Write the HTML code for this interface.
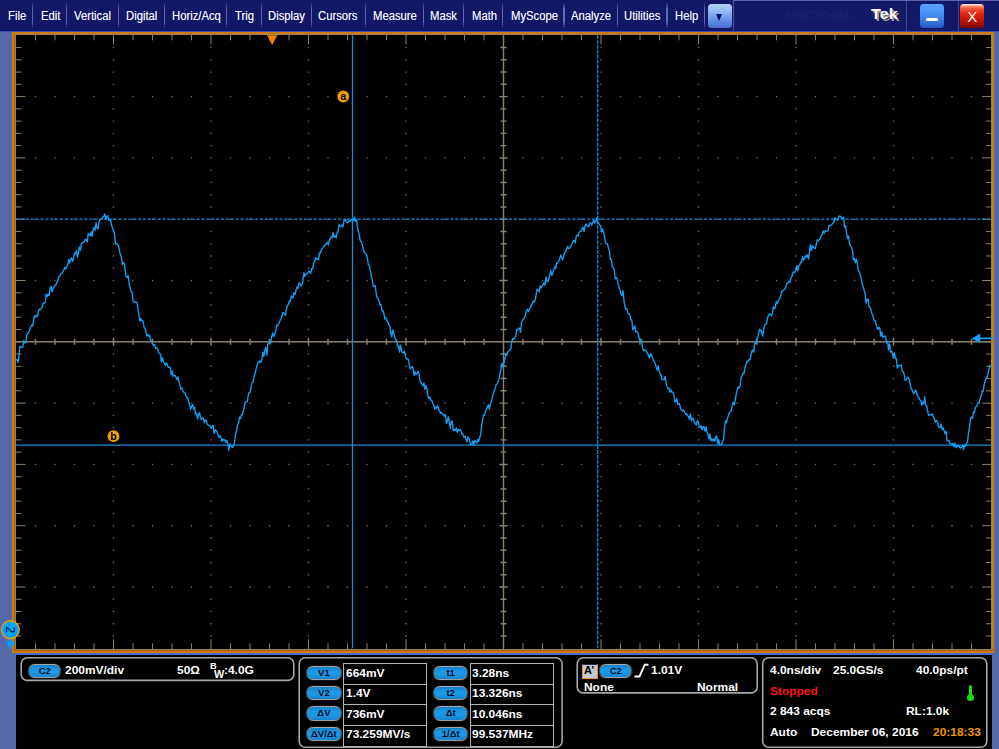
<!DOCTYPE html>
<html lang="en">
<head>
<meta charset="utf-8">
<title>Tek MSO70404C</title>
<style>
html,body{margin:0;padding:0;}
body{width:999px;height:749px;overflow:hidden;background:#5568aa;position:relative;
  font-family:"Liberation Sans",sans-serif;font-size:12px;color:#fff;}
.abs{position:absolute;}
/* ---------- menu bar ---------- */
#menubar{left:0;top:0;width:999px;height:31px;background:#131768;}
#menuline{left:0;top:31px;width:999px;height:1px;background:#3a4cb4;}
.mi{position:absolute;top:8px;height:16px;line-height:16px;font-size:12px;color:#f4f4ff;white-space:nowrap;transform:scaleX(0.94);transform-origin:0 50%;text-shadow:0 0 0.6px rgba(255,255,255,0.6);}
.sep{position:absolute;top:3px;width:1.2px;height:25px;
  background:linear-gradient(to bottom,rgba(110,120,190,0.1),rgba(110,120,190,0.85) 25%,rgba(110,120,190,0.85) 75%,rgba(110,120,190,0.1));}
#dd{left:707.5px;top:4px;width:24px;height:24px;border-radius:3.5px;
  background:linear-gradient(to bottom,#b6d2fc 0%,#8db4f4 35%,#5884dc 78%,#4870cc 100%);box-shadow:0 0 1px #0a0f50;}
#dd:after{content:"";position:absolute;left:8.5px;top:9.5px;border-left:3.6px solid transparent;border-right:3.6px solid transparent;border-top:7px solid #0a0a78;}
#titlebox{left:733px;top:0;width:266px;height:31px;box-sizing:border-box;border-top:1px solid #5a62ac;border-left:1px solid #4a52a0;background:#141967;}
#model{left:786px;top:8px;font-size:13px;line-height:16px;color:#1b2172;transform:scaleX(0.97);transform-origin:0 50%;}
#tek{left:871px;top:4px;font-size:15px;line-height:20px;font-weight:bold;color:#fff;text-shadow:1.6px 1.6px 0.4px #a09888;transform:scaleX(1.08);transform-origin:0 50%;}
.tsep{position:absolute;top:1px;width:1px;height:30px;background:#3e4696;}
#minb{left:920.3px;top:4px;width:24px;height:24px;border-radius:3.5px;
  background:linear-gradient(to bottom,#5aa2ff 0%,#4a92f6 40%,#3270d8 78%,#2458b8 100%);}
#minb:after{content:"";position:absolute;left:6px;top:14.4px;width:11.6px;height:2.2px;background:#fff;border-radius:1px;}
#closeb{left:960.2px;top:4px;width:24px;height:24px;border-radius:3.5px;text-align:center;
  background:linear-gradient(to bottom,#fff0e8 0%,#f46a48 14%,#e42408 40%,#c81400 66%,#7a0800 100%);
  color:#fff;font-size:15px;line-height:25px;font-weight:normal;}
/* ---------- scope frame ---------- */
#frame{left:12px;top:32px;width:982px;height:620.6px;background:#d07a00;}
#frameshade{left:14.2px;top:34px;width:1.8px;height:616px;background:rgba(90,50,10,0.35);}
#inner{left:16.2px;top:35px;width:975px;height:614.3px;background:#000;box-shadow:0 0 0 0.9px #9c8860;}
#strip{left:12px;top:652.6px;width:982px;height:2.4px;background:#4c6ac4;}
#bottom{left:16px;top:655px;width:976px;height:94px;background:#000;}
svg.scope{position:absolute;left:0;top:0;}
/* ---------- readout panels ---------- */
.panel{position:absolute;box-sizing:border-box;border:2px solid #8e8e8e;border-radius:6.5px;background:#000;}
.b{opacity:0.999;font-weight:bold;font-size:11.6px;line-height:14px;white-space:nowrap;position:absolute;color:#fff;transform:scaleX(1.03);transform-origin:0 50%;}
.pill{position:absolute;box-sizing:border-box;height:14.4px;border-radius:7.5px;border:1.7px solid transparent;margin:-0.8px 0 0 -0.5px;padding-right:0;
  background:linear-gradient(to bottom,#127cc4 0%,#1a96e4 30%,#1c9ae8 60%,#1482cc 100%) padding-box,
             linear-gradient(to bottom,#b0b0b0 0%,#686868 28%,#3c3c3c 60%,#a8a8a8 100%) border-box;
  color:#00081c;font-weight:bold;font-size:9.5px;line-height:11.8px;text-align:center;white-space:nowrap;box-shadow:0 0 1.2px #707070;}
.vbox{position:absolute;box-sizing:border-box;border:1px solid #b4b4b4;background:#000;}
</style>
</head>
<body>
<!-- menu bar -->
<div id="menubar" class="abs"></div>
<div id="menuline" class="abs"></div>
<div class="mi" style="left:7.5px">File</div>
<div class="mi" style="left:40.5px">Edit</div>
<div class="mi" style="left:74.2px">Vertical</div>
<div class="mi" style="left:125.5px">Digital</div>
<div class="mi" style="left:172.2px">Horiz/Acq</div>
<div class="mi" style="left:234.7px">Trig</div>
<div class="mi" style="left:267.9px">Display</div>
<div class="mi" style="left:318.4px">Cursors</div>
<div class="mi" style="left:372.9px">Measure</div>
<div class="mi" style="left:430.4px">Mask</div>
<div class="mi" style="left:471.6px">Math</div>
<div class="mi" style="left:510.8px">MyScope</div>
<div class="mi" style="left:571.2px">Analyze</div>
<div class="mi" style="left:624.0px">Utilities</div>
<div class="mi" style="left:674.8px">Help</div>
<div class="sep" style="left:32px"></div>
<div class="sep" style="left:66.2px"></div>
<div class="sep" style="left:117.6px"></div>
<div class="sep" style="left:163.6px"></div>
<div class="sep" style="left:226.3px"></div>
<div class="sep" style="left:260.6px"></div>
<div class="sep" style="left:311.2px"></div>
<div class="sep" style="left:364.9px"></div>
<div class="sep" style="left:422.5px"></div>
<div class="sep" style="left:463.2px"></div>
<div class="sep" style="left:502.3px"></div>
<div class="sep" style="left:563.4px"></div>
<div class="sep" style="left:616.5px"></div>
<div class="sep" style="left:666.4px"></div>
<div class="sep" style="left:703.6px"></div>
<div id="titlebox" class="abs"></div>
<div id="dd" class="abs"></div>
<div id="model" class="abs">MSO70404C</div>
<div id="tek" class="abs">Tek</div>
<div class="tsep" style="left:906.4px"></div>
<div class="tsep" style="left:958.2px"></div>
<div id="minb" class="abs"></div>
<div id="closeb" class="abs">X</div>

<!-- scope display -->
<div id="frame" class="abs"></div>
<div id="frameshade" class="abs"></div>
<div class="abs" style="left:14.2px;top:649.3px;width:978.6px;height:1.3px;background:rgba(90,50,10,0.35)"></div>
<div class="abs" style="left:991.2px;top:34px;width:1px;height:616px;background:rgba(90,50,10,0.3)"></div>
<div id="inner" class="abs"></div>
<div id="strip" class="abs"></div>
<div id="bottom" class="abs"></div>

<!-- panel 1 : channel -->
<div class="pill" style="left:28.7px;top:664.8px;width:33.2px">C2</div>
<div class="b" style="left:65.4px;top:663.0px">200mV/div</div>
<div class="b" style="left:177.4px;top:663.0px">50&#937;</div>
<div class="b" style="left:209.6px;top:658.6px;font-size:9px">B</div>
<div class="b" style="left:213.8px;top:667.2px;font-size:10.5px">W</div>
<div class="b" style="left:223.6px;top:663.0px">:4.0G</div>

<!-- panel 2 : cursor readouts -->
<div class="pill" style="left:306.6px;top:666.6px;width:35.6px">V1</div>
<div class="pill" style="left:306.6px;top:686.8px;width:35.6px">V2</div>
<div class="pill" style="left:306.6px;top:707.2px;width:35.6px">&#916;V</div>
<div class="pill" style="left:306.6px;top:727.6px;width:35.6px">&#916;V/&#916;t</div>
<div class="vbox" style="left:343.2px;top:663.2px;width:84.2px;height:21.7px"></div>
<div class="vbox" style="left:343.2px;top:683.9px;width:84.2px;height:20.9px"></div>
<div class="vbox" style="left:343.2px;top:703.8px;width:84.2px;height:21.8px"></div>
<div class="vbox" style="left:343.2px;top:724.6px;width:84.2px;height:22.3px"></div>
<div class="b" style="left:345.5px;top:665.9px">664mV</div>
<div class="b" style="left:345.5px;top:686.3px">1.4V</div>
<div class="b" style="left:345.5px;top:706.6px">736mV</div>
<div class="b" style="left:345.5px;top:727.0px">73.259MV/s</div>
<div class="pill" style="left:433.4px;top:666.6px;width:35.6px">t1</div>
<div class="pill" style="left:433.4px;top:686.8px;width:35.6px">t2</div>
<div class="pill" style="left:433.4px;top:707.2px;width:35.6px">&#916;t</div>
<div class="pill" style="left:433.4px;top:727.6px;width:35.6px">1/&#916;t</div>
<div class="vbox" style="left:470.0px;top:663.2px;width:84.2px;height:21.7px"></div>
<div class="vbox" style="left:470.0px;top:683.9px;width:84.2px;height:20.9px"></div>
<div class="vbox" style="left:470.0px;top:703.8px;width:84.2px;height:21.8px"></div>
<div class="vbox" style="left:470.0px;top:724.6px;width:84.2px;height:22.3px"></div>
<div class="b" style="left:472.4px;top:665.9px">3.28ns</div>
<div class="b" style="left:472.4px;top:686.3px">13.326ns</div>
<div class="b" style="left:472.4px;top:706.6px">10.046ns</div>
<div class="b" style="left:472.4px;top:727.0px">99.537MHz</div>

<!-- panel 3 : trigger -->
<div class="abs" style="left:582.4px;top:663.6px;width:15.6px;height:15.2px;box-sizing:border-box;background:#c6c8d2;border:1.3px solid #f09020;border-top:1px solid #283058;color:#000;font-size:11px;line-height:11.4px;text-align:left;padding-left:0.6px;font-weight:bold;letter-spacing:-0.4px;">A'</div>
<div class="pill" style="left:599.8px;top:664.5px;width:33.0px">C2</div>
<svg class="abs" style="left:634px;top:663px" width="16" height="16" viewBox="0 0 16 16"><path d="M0.5 13.5h5l5.2-11.8h3.8" fill="none" stroke="#fff" stroke-width="1.9"/></svg>
<div class="b" style="left:651.2px;top:662.5px">1.01V</div>
<div class="b" style="left:584.2px;top:679.5px">None</div>
<div class="b" style="left:697.2px;top:679.5px">Normal</div>

<!-- panel 4 : horizontal / acquisition -->
<div class="b" style="left:769.8px;top:663.0px">4.0ns/div</div>
<div class="b" style="left:833.4px;top:663.0px">25.0GS/s</div>
<div class="b" style="left:916.4px;top:663.0px">40.0ps/pt</div>
<div class="b" style="left:769.8px;top:684.0px;color:#ff1010">Stopped</div>
<div class="abs" style="left:968.6px;top:685px;width:3px;height:13px;background:#10e010;border-radius:1.5px"></div>
<div class="abs" style="left:966.6px;top:693.6px;width:7px;height:7px;background:#10e010;border-radius:50%"></div>
<div class="b" style="left:769.8px;top:704.4px">2 843 acqs</div>
<div class="b" style="left:906.4px;top:704.4px">RL:1.0k</div>
<div class="b" style="left:769.8px;top:724.5px">Auto</div>
<div class="b" style="left:811.0px;top:724.5px">December 06, 2016</div>
<div class="b" style="left:933.0px;top:724.5px;color:#f09408">20:18:33</div>

<svg class="scope" width="999" height="749" viewBox="0 0 999 749"><path d="M112.8 47.56h1.4M112.8 59.82h1.4M112.8 72.08h1.4M112.8 84.34h1.4M112.8 96.6h1.4M112.8 108.86h1.4M112.8 121.12h1.4M112.8 133.38h1.4M112.8 145.64h1.4M112.8 157.9h1.4M112.8 170.16h1.4M112.8 182.42h1.4M112.8 194.68h1.4M112.8 206.94h1.4M112.8 219.2h1.4M112.8 231.46h1.4M112.8 243.72h1.4M112.8 255.98h1.4M112.8 268.24h1.4M112.8 280.5h1.4M112.8 292.76h1.4M112.8 305.02h1.4M112.8 317.28h1.4M112.8 329.54h1.4M112.8 341.8h1.4M112.8 354.06h1.4M112.8 366.32h1.4M112.8 378.58h1.4M112.8 390.84h1.4M112.8 403.1h1.4M112.8 415.36h1.4M112.8 427.62h1.4M112.8 439.88h1.4M112.8 452.14h1.4M112.8 464.4h1.4M112.8 476.66h1.4M112.8 488.92h1.4M112.8 501.18h1.4M112.8 513.44h1.4M112.8 525.7h1.4M112.8 537.96h1.4M112.8 550.22h1.4M112.8 562.48h1.4M112.8 574.74h1.4M112.8 587h1.4M112.8 599.26h1.4M112.8 611.52h1.4M112.8 623.78h1.4M112.8 636.04h1.4M210.3 47.56h1.4M210.3 59.82h1.4M210.3 72.08h1.4M210.3 84.34h1.4M210.3 96.6h1.4M210.3 108.86h1.4M210.3 121.12h1.4M210.3 133.38h1.4M210.3 145.64h1.4M210.3 157.9h1.4M210.3 170.16h1.4M210.3 182.42h1.4M210.3 194.68h1.4M210.3 206.94h1.4M210.3 219.2h1.4M210.3 231.46h1.4M210.3 243.72h1.4M210.3 255.98h1.4M210.3 268.24h1.4M210.3 280.5h1.4M210.3 292.76h1.4M210.3 305.02h1.4M210.3 317.28h1.4M210.3 329.54h1.4M210.3 341.8h1.4M210.3 354.06h1.4M210.3 366.32h1.4M210.3 378.58h1.4M210.3 390.84h1.4M210.3 403.1h1.4M210.3 415.36h1.4M210.3 427.62h1.4M210.3 439.88h1.4M210.3 452.14h1.4M210.3 464.4h1.4M210.3 476.66h1.4M210.3 488.92h1.4M210.3 501.18h1.4M210.3 513.44h1.4M210.3 525.7h1.4M210.3 537.96h1.4M210.3 550.22h1.4M210.3 562.48h1.4M210.3 574.74h1.4M210.3 587h1.4M210.3 599.26h1.4M210.3 611.52h1.4M210.3 623.78h1.4M210.3 636.04h1.4M307.8 47.56h1.4M307.8 59.82h1.4M307.8 72.08h1.4M307.8 84.34h1.4M307.8 96.6h1.4M307.8 108.86h1.4M307.8 121.12h1.4M307.8 133.38h1.4M307.8 145.64h1.4M307.8 157.9h1.4M307.8 170.16h1.4M307.8 182.42h1.4M307.8 194.68h1.4M307.8 206.94h1.4M307.8 219.2h1.4M307.8 231.46h1.4M307.8 243.72h1.4M307.8 255.98h1.4M307.8 268.24h1.4M307.8 280.5h1.4M307.8 292.76h1.4M307.8 305.02h1.4M307.8 317.28h1.4M307.8 329.54h1.4M307.8 341.8h1.4M307.8 354.06h1.4M307.8 366.32h1.4M307.8 378.58h1.4M307.8 390.84h1.4M307.8 403.1h1.4M307.8 415.36h1.4M307.8 427.62h1.4M307.8 439.88h1.4M307.8 452.14h1.4M307.8 464.4h1.4M307.8 476.66h1.4M307.8 488.92h1.4M307.8 501.18h1.4M307.8 513.44h1.4M307.8 525.7h1.4M307.8 537.96h1.4M307.8 550.22h1.4M307.8 562.48h1.4M307.8 574.74h1.4M307.8 587h1.4M307.8 599.26h1.4M307.8 611.52h1.4M307.8 623.78h1.4M307.8 636.04h1.4M405.3 47.56h1.4M405.3 59.82h1.4M405.3 72.08h1.4M405.3 84.34h1.4M405.3 96.6h1.4M405.3 108.86h1.4M405.3 121.12h1.4M405.3 133.38h1.4M405.3 145.64h1.4M405.3 157.9h1.4M405.3 170.16h1.4M405.3 182.42h1.4M405.3 194.68h1.4M405.3 206.94h1.4M405.3 219.2h1.4M405.3 231.46h1.4M405.3 243.72h1.4M405.3 255.98h1.4M405.3 268.24h1.4M405.3 280.5h1.4M405.3 292.76h1.4M405.3 305.02h1.4M405.3 317.28h1.4M405.3 329.54h1.4M405.3 341.8h1.4M405.3 354.06h1.4M405.3 366.32h1.4M405.3 378.58h1.4M405.3 390.84h1.4M405.3 403.1h1.4M405.3 415.36h1.4M405.3 427.62h1.4M405.3 439.88h1.4M405.3 452.14h1.4M405.3 464.4h1.4M405.3 476.66h1.4M405.3 488.92h1.4M405.3 501.18h1.4M405.3 513.44h1.4M405.3 525.7h1.4M405.3 537.96h1.4M405.3 550.22h1.4M405.3 562.48h1.4M405.3 574.74h1.4M405.3 587h1.4M405.3 599.26h1.4M405.3 611.52h1.4M405.3 623.78h1.4M405.3 636.04h1.4M600.3 47.56h1.4M600.3 59.82h1.4M600.3 72.08h1.4M600.3 84.34h1.4M600.3 96.6h1.4M600.3 108.86h1.4M600.3 121.12h1.4M600.3 133.38h1.4M600.3 145.64h1.4M600.3 157.9h1.4M600.3 170.16h1.4M600.3 182.42h1.4M600.3 194.68h1.4M600.3 206.94h1.4M600.3 219.2h1.4M600.3 231.46h1.4M600.3 243.72h1.4M600.3 255.98h1.4M600.3 268.24h1.4M600.3 280.5h1.4M600.3 292.76h1.4M600.3 305.02h1.4M600.3 317.28h1.4M600.3 329.54h1.4M600.3 341.8h1.4M600.3 354.06h1.4M600.3 366.32h1.4M600.3 378.58h1.4M600.3 390.84h1.4M600.3 403.1h1.4M600.3 415.36h1.4M600.3 427.62h1.4M600.3 439.88h1.4M600.3 452.14h1.4M600.3 464.4h1.4M600.3 476.66h1.4M600.3 488.92h1.4M600.3 501.18h1.4M600.3 513.44h1.4M600.3 525.7h1.4M600.3 537.96h1.4M600.3 550.22h1.4M600.3 562.48h1.4M600.3 574.74h1.4M600.3 587h1.4M600.3 599.26h1.4M600.3 611.52h1.4M600.3 623.78h1.4M600.3 636.04h1.4M697.8 47.56h1.4M697.8 59.82h1.4M697.8 72.08h1.4M697.8 84.34h1.4M697.8 96.6h1.4M697.8 108.86h1.4M697.8 121.12h1.4M697.8 133.38h1.4M697.8 145.64h1.4M697.8 157.9h1.4M697.8 170.16h1.4M697.8 182.42h1.4M697.8 194.68h1.4M697.8 206.94h1.4M697.8 219.2h1.4M697.8 231.46h1.4M697.8 243.72h1.4M697.8 255.98h1.4M697.8 268.24h1.4M697.8 280.5h1.4M697.8 292.76h1.4M697.8 305.02h1.4M697.8 317.28h1.4M697.8 329.54h1.4M697.8 341.8h1.4M697.8 354.06h1.4M697.8 366.32h1.4M697.8 378.58h1.4M697.8 390.84h1.4M697.8 403.1h1.4M697.8 415.36h1.4M697.8 427.62h1.4M697.8 439.88h1.4M697.8 452.14h1.4M697.8 464.4h1.4M697.8 476.66h1.4M697.8 488.92h1.4M697.8 501.18h1.4M697.8 513.44h1.4M697.8 525.7h1.4M697.8 537.96h1.4M697.8 550.22h1.4M697.8 562.48h1.4M697.8 574.74h1.4M697.8 587h1.4M697.8 599.26h1.4M697.8 611.52h1.4M697.8 623.78h1.4M697.8 636.04h1.4M795.3 47.56h1.4M795.3 59.82h1.4M795.3 72.08h1.4M795.3 84.34h1.4M795.3 96.6h1.4M795.3 108.86h1.4M795.3 121.12h1.4M795.3 133.38h1.4M795.3 145.64h1.4M795.3 157.9h1.4M795.3 170.16h1.4M795.3 182.42h1.4M795.3 194.68h1.4M795.3 206.94h1.4M795.3 219.2h1.4M795.3 231.46h1.4M795.3 243.72h1.4M795.3 255.98h1.4M795.3 268.24h1.4M795.3 280.5h1.4M795.3 292.76h1.4M795.3 305.02h1.4M795.3 317.28h1.4M795.3 329.54h1.4M795.3 341.8h1.4M795.3 354.06h1.4M795.3 366.32h1.4M795.3 378.58h1.4M795.3 390.84h1.4M795.3 403.1h1.4M795.3 415.36h1.4M795.3 427.62h1.4M795.3 439.88h1.4M795.3 452.14h1.4M795.3 464.4h1.4M795.3 476.66h1.4M795.3 488.92h1.4M795.3 501.18h1.4M795.3 513.44h1.4M795.3 525.7h1.4M795.3 537.96h1.4M795.3 550.22h1.4M795.3 562.48h1.4M795.3 574.74h1.4M795.3 587h1.4M795.3 599.26h1.4M795.3 611.52h1.4M795.3 623.78h1.4M795.3 636.04h1.4M892.8 47.56h1.4M892.8 59.82h1.4M892.8 72.08h1.4M892.8 84.34h1.4M892.8 96.6h1.4M892.8 108.86h1.4M892.8 121.12h1.4M892.8 133.38h1.4M892.8 145.64h1.4M892.8 157.9h1.4M892.8 170.16h1.4M892.8 182.42h1.4M892.8 194.68h1.4M892.8 206.94h1.4M892.8 219.2h1.4M892.8 231.46h1.4M892.8 243.72h1.4M892.8 255.98h1.4M892.8 268.24h1.4M892.8 280.5h1.4M892.8 292.76h1.4M892.8 305.02h1.4M892.8 317.28h1.4M892.8 329.54h1.4M892.8 341.8h1.4M892.8 354.06h1.4M892.8 366.32h1.4M892.8 378.58h1.4M892.8 390.84h1.4M892.8 403.1h1.4M892.8 415.36h1.4M892.8 427.62h1.4M892.8 439.88h1.4M892.8 452.14h1.4M892.8 464.4h1.4M892.8 476.66h1.4M892.8 488.92h1.4M892.8 501.18h1.4M892.8 513.44h1.4M892.8 525.7h1.4M892.8 537.96h1.4M892.8 550.22h1.4M892.8 562.48h1.4M892.8 574.74h1.4M892.8 587h1.4M892.8 599.26h1.4M892.8 611.52h1.4M892.8 623.78h1.4M892.8 636.04h1.4M34.8 96.6h1.4M54.3 96.6h1.4M73.8 96.6h1.4M93.3 96.6h1.4M132.3 96.6h1.4M151.8 96.6h1.4M171.3 96.6h1.4M190.8 96.6h1.4M229.8 96.6h1.4M249.3 96.6h1.4M268.8 96.6h1.4M288.3 96.6h1.4M327.3 96.6h1.4M346.8 96.6h1.4M366.3 96.6h1.4M385.8 96.6h1.4M424.8 96.6h1.4M444.3 96.6h1.4M463.8 96.6h1.4M483.3 96.6h1.4M522.3 96.6h1.4M541.8 96.6h1.4M561.3 96.6h1.4M580.8 96.6h1.4M619.8 96.6h1.4M639.3 96.6h1.4M658.8 96.6h1.4M678.3 96.6h1.4M717.3 96.6h1.4M736.8 96.6h1.4M756.3 96.6h1.4M775.8 96.6h1.4M814.8 96.6h1.4M834.3 96.6h1.4M853.8 96.6h1.4M873.3 96.6h1.4M912.3 96.6h1.4M931.8 96.6h1.4M951.3 96.6h1.4M970.8 96.6h1.4M34.8 157.9h1.4M54.3 157.9h1.4M73.8 157.9h1.4M93.3 157.9h1.4M132.3 157.9h1.4M151.8 157.9h1.4M171.3 157.9h1.4M190.8 157.9h1.4M229.8 157.9h1.4M249.3 157.9h1.4M268.8 157.9h1.4M288.3 157.9h1.4M327.3 157.9h1.4M346.8 157.9h1.4M366.3 157.9h1.4M385.8 157.9h1.4M424.8 157.9h1.4M444.3 157.9h1.4M463.8 157.9h1.4M483.3 157.9h1.4M522.3 157.9h1.4M541.8 157.9h1.4M561.3 157.9h1.4M580.8 157.9h1.4M619.8 157.9h1.4M639.3 157.9h1.4M658.8 157.9h1.4M678.3 157.9h1.4M717.3 157.9h1.4M736.8 157.9h1.4M756.3 157.9h1.4M775.8 157.9h1.4M814.8 157.9h1.4M834.3 157.9h1.4M853.8 157.9h1.4M873.3 157.9h1.4M912.3 157.9h1.4M931.8 157.9h1.4M951.3 157.9h1.4M970.8 157.9h1.4M34.8 219.2h1.4M54.3 219.2h1.4M73.8 219.2h1.4M93.3 219.2h1.4M132.3 219.2h1.4M151.8 219.2h1.4M171.3 219.2h1.4M190.8 219.2h1.4M229.8 219.2h1.4M249.3 219.2h1.4M268.8 219.2h1.4M288.3 219.2h1.4M327.3 219.2h1.4M346.8 219.2h1.4M366.3 219.2h1.4M385.8 219.2h1.4M424.8 219.2h1.4M444.3 219.2h1.4M463.8 219.2h1.4M483.3 219.2h1.4M522.3 219.2h1.4M541.8 219.2h1.4M561.3 219.2h1.4M580.8 219.2h1.4M619.8 219.2h1.4M639.3 219.2h1.4M658.8 219.2h1.4M678.3 219.2h1.4M717.3 219.2h1.4M736.8 219.2h1.4M756.3 219.2h1.4M775.8 219.2h1.4M814.8 219.2h1.4M834.3 219.2h1.4M853.8 219.2h1.4M873.3 219.2h1.4M912.3 219.2h1.4M931.8 219.2h1.4M951.3 219.2h1.4M970.8 219.2h1.4M34.8 280.5h1.4M54.3 280.5h1.4M73.8 280.5h1.4M93.3 280.5h1.4M132.3 280.5h1.4M151.8 280.5h1.4M171.3 280.5h1.4M190.8 280.5h1.4M229.8 280.5h1.4M249.3 280.5h1.4M268.8 280.5h1.4M288.3 280.5h1.4M327.3 280.5h1.4M346.8 280.5h1.4M366.3 280.5h1.4M385.8 280.5h1.4M424.8 280.5h1.4M444.3 280.5h1.4M463.8 280.5h1.4M483.3 280.5h1.4M522.3 280.5h1.4M541.8 280.5h1.4M561.3 280.5h1.4M580.8 280.5h1.4M619.8 280.5h1.4M639.3 280.5h1.4M658.8 280.5h1.4M678.3 280.5h1.4M717.3 280.5h1.4M736.8 280.5h1.4M756.3 280.5h1.4M775.8 280.5h1.4M814.8 280.5h1.4M834.3 280.5h1.4M853.8 280.5h1.4M873.3 280.5h1.4M912.3 280.5h1.4M931.8 280.5h1.4M951.3 280.5h1.4M970.8 280.5h1.4M34.8 403.1h1.4M54.3 403.1h1.4M73.8 403.1h1.4M93.3 403.1h1.4M132.3 403.1h1.4M151.8 403.1h1.4M171.3 403.1h1.4M190.8 403.1h1.4M229.8 403.1h1.4M249.3 403.1h1.4M268.8 403.1h1.4M288.3 403.1h1.4M327.3 403.1h1.4M346.8 403.1h1.4M366.3 403.1h1.4M385.8 403.1h1.4M424.8 403.1h1.4M444.3 403.1h1.4M463.8 403.1h1.4M483.3 403.1h1.4M522.3 403.1h1.4M541.8 403.1h1.4M561.3 403.1h1.4M580.8 403.1h1.4M619.8 403.1h1.4M639.3 403.1h1.4M658.8 403.1h1.4M678.3 403.1h1.4M717.3 403.1h1.4M736.8 403.1h1.4M756.3 403.1h1.4M775.8 403.1h1.4M814.8 403.1h1.4M834.3 403.1h1.4M853.8 403.1h1.4M873.3 403.1h1.4M912.3 403.1h1.4M931.8 403.1h1.4M951.3 403.1h1.4M970.8 403.1h1.4M34.8 464.4h1.4M54.3 464.4h1.4M73.8 464.4h1.4M93.3 464.4h1.4M132.3 464.4h1.4M151.8 464.4h1.4M171.3 464.4h1.4M190.8 464.4h1.4M229.8 464.4h1.4M249.3 464.4h1.4M268.8 464.4h1.4M288.3 464.4h1.4M327.3 464.4h1.4M346.8 464.4h1.4M366.3 464.4h1.4M385.8 464.4h1.4M424.8 464.4h1.4M444.3 464.4h1.4M463.8 464.4h1.4M483.3 464.4h1.4M522.3 464.4h1.4M541.8 464.4h1.4M561.3 464.4h1.4M580.8 464.4h1.4M619.8 464.4h1.4M639.3 464.4h1.4M658.8 464.4h1.4M678.3 464.4h1.4M717.3 464.4h1.4M736.8 464.4h1.4M756.3 464.4h1.4M775.8 464.4h1.4M814.8 464.4h1.4M834.3 464.4h1.4M853.8 464.4h1.4M873.3 464.4h1.4M912.3 464.4h1.4M931.8 464.4h1.4M951.3 464.4h1.4M970.8 464.4h1.4M34.8 525.7h1.4M54.3 525.7h1.4M73.8 525.7h1.4M93.3 525.7h1.4M132.3 525.7h1.4M151.8 525.7h1.4M171.3 525.7h1.4M190.8 525.7h1.4M229.8 525.7h1.4M249.3 525.7h1.4M268.8 525.7h1.4M288.3 525.7h1.4M327.3 525.7h1.4M346.8 525.7h1.4M366.3 525.7h1.4M385.8 525.7h1.4M424.8 525.7h1.4M444.3 525.7h1.4M463.8 525.7h1.4M483.3 525.7h1.4M522.3 525.7h1.4M541.8 525.7h1.4M561.3 525.7h1.4M580.8 525.7h1.4M619.8 525.7h1.4M639.3 525.7h1.4M658.8 525.7h1.4M678.3 525.7h1.4M717.3 525.7h1.4M736.8 525.7h1.4M756.3 525.7h1.4M775.8 525.7h1.4M814.8 525.7h1.4M834.3 525.7h1.4M853.8 525.7h1.4M873.3 525.7h1.4M912.3 525.7h1.4M931.8 525.7h1.4M951.3 525.7h1.4M970.8 525.7h1.4M34.8 587h1.4M54.3 587h1.4M73.8 587h1.4M93.3 587h1.4M132.3 587h1.4M151.8 587h1.4M171.3 587h1.4M190.8 587h1.4M229.8 587h1.4M249.3 587h1.4M268.8 587h1.4M288.3 587h1.4M327.3 587h1.4M346.8 587h1.4M366.3 587h1.4M385.8 587h1.4M424.8 587h1.4M444.3 587h1.4M463.8 587h1.4M483.3 587h1.4M522.3 587h1.4M541.8 587h1.4M561.3 587h1.4M580.8 587h1.4M619.8 587h1.4M639.3 587h1.4M658.8 587h1.4M678.3 587h1.4M717.3 587h1.4M736.8 587h1.4M756.3 587h1.4M775.8 587h1.4M814.8 587h1.4M834.3 587h1.4M853.8 587h1.4M873.3 587h1.4M912.3 587h1.4M931.8 587h1.4M951.3 587h1.4M970.8 587h1.4" stroke="#8c8468" stroke-width="1.4" fill="none" opacity="0.8"/><path d="M35.5 34.7v5.6M35.5 649.3v-6.0M55 34.7v5.6M55 649.3v-6.0M74.5 34.7v5.6M74.5 649.3v-6.0M94 34.7v5.6M94 649.3v-6.0M113.5 34.7v9.6M113.5 649.3v-10.0M133 34.7v5.6M133 649.3v-6.0M152.5 34.7v5.6M152.5 649.3v-6.0M172 34.7v5.6M172 649.3v-6.0M191.5 34.7v5.6M191.5 649.3v-6.0M211 34.7v9.6M211 649.3v-10.0M230.5 34.7v5.6M230.5 649.3v-6.0M250 34.7v5.6M250 649.3v-6.0M269.5 34.7v5.6M269.5 649.3v-6.0M289 34.7v5.6M289 649.3v-6.0M308.5 34.7v9.6M308.5 649.3v-10.0M328 34.7v5.6M328 649.3v-6.0M347.5 34.7v5.6M347.5 649.3v-6.0M367 34.7v5.6M367 649.3v-6.0M386.5 34.7v5.6M386.5 649.3v-6.0M406 34.7v9.6M406 649.3v-10.0M425.5 34.7v5.6M425.5 649.3v-6.0M445 34.7v5.6M445 649.3v-6.0M464.5 34.7v5.6M464.5 649.3v-6.0M484 34.7v5.6M484 649.3v-6.0M503.5 34.7v9.6M503.5 649.3v-10.0M523 34.7v5.6M523 649.3v-6.0M542.5 34.7v5.6M542.5 649.3v-6.0M562 34.7v5.6M562 649.3v-6.0M581.5 34.7v5.6M581.5 649.3v-6.0M601 34.7v9.6M601 649.3v-10.0M620.5 34.7v5.6M620.5 649.3v-6.0M640 34.7v5.6M640 649.3v-6.0M659.5 34.7v5.6M659.5 649.3v-6.0M679 34.7v5.6M679 649.3v-6.0M698.5 34.7v9.6M698.5 649.3v-10.0M718 34.7v5.6M718 649.3v-6.0M737.5 34.7v5.6M737.5 649.3v-6.0M757 34.7v5.6M757 649.3v-6.0M776.5 34.7v5.6M776.5 649.3v-6.0M796 34.7v9.6M796 649.3v-10.0M815.5 34.7v5.6M815.5 649.3v-6.0M835 34.7v5.6M835 649.3v-6.0M854.5 34.7v5.6M854.5 649.3v-6.0M874 34.7v5.6M874 649.3v-6.0M893.5 34.7v9.6M893.5 649.3v-10.0M913 34.7v5.6M913 649.3v-6.0M932.5 34.7v5.6M932.5 649.3v-6.0M952 34.7v5.6M952 649.3v-6.0M971.5 34.7v5.6M971.5 649.3v-6.0M16 47.56h5.4M991.4 47.56h-5.4M16 59.82h5.4M991.4 59.82h-5.4M16 72.08h5.4M991.4 72.08h-5.4M16 84.34h5.4M991.4 84.34h-5.4M16 96.6h9.4M991.4 96.6h-9.4M16 108.86h5.4M991.4 108.86h-5.4M16 121.12h5.4M991.4 121.12h-5.4M16 133.38h5.4M991.4 133.38h-5.4M16 145.64h5.4M991.4 145.64h-5.4M16 157.9h9.4M991.4 157.9h-9.4M16 170.16h5.4M991.4 170.16h-5.4M16 182.42h5.4M991.4 182.42h-5.4M16 194.68h5.4M991.4 194.68h-5.4M16 206.94h5.4M991.4 206.94h-5.4M16 219.2h9.4M991.4 219.2h-9.4M16 231.46h5.4M991.4 231.46h-5.4M16 243.72h5.4M991.4 243.72h-5.4M16 255.98h5.4M991.4 255.98h-5.4M16 268.24h5.4M991.4 268.24h-5.4M16 280.5h9.4M991.4 280.5h-9.4M16 292.76h5.4M991.4 292.76h-5.4M16 305.02h5.4M991.4 305.02h-5.4M16 317.28h5.4M991.4 317.28h-5.4M16 329.54h5.4M991.4 329.54h-5.4M16 341.8h9.4M991.4 341.8h-9.4M16 354.06h5.4M991.4 354.06h-5.4M16 366.32h5.4M991.4 366.32h-5.4M16 378.58h5.4M991.4 378.58h-5.4M16 390.84h5.4M991.4 390.84h-5.4M16 403.1h9.4M991.4 403.1h-9.4M16 415.36h5.4M991.4 415.36h-5.4M16 427.62h5.4M991.4 427.62h-5.4M16 439.88h5.4M991.4 439.88h-5.4M16 452.14h5.4M991.4 452.14h-5.4M16 464.4h9.4M991.4 464.4h-9.4M16 476.66h5.4M991.4 476.66h-5.4M16 488.92h5.4M991.4 488.92h-5.4M16 501.18h5.4M991.4 501.18h-5.4M16 513.44h5.4M991.4 513.44h-5.4M16 525.7h9.4M991.4 525.7h-9.4M16 537.96h5.4M991.4 537.96h-5.4M16 550.22h5.4M991.4 550.22h-5.4M16 562.48h5.4M991.4 562.48h-5.4M16 574.74h5.4M991.4 574.74h-5.4M16 587h9.4M991.4 587h-9.4M16 599.26h5.4M991.4 599.26h-5.4M16 611.52h5.4M991.4 611.52h-5.4M16 623.78h5.4M991.4 623.78h-5.4M16 636.04h5.4M991.4 636.04h-5.4" stroke="#8c8468" stroke-width="1" fill="none"/><path d="M16 341.8H991M503.5 35.3V648.3M35.5 338.8v6M55 338.8v6M74.5 338.8v6M94 338.8v6M113.5 337.8v8M133 338.8v6M152.5 338.8v6M172 338.8v6M191.5 338.8v6M211 337.8v8M230.5 338.8v6M250 338.8v6M269.5 338.8v6M289 338.8v6M308.5 337.8v8M328 338.8v6M347.5 338.8v6M367 338.8v6M386.5 338.8v6M406 337.8v8M425.5 338.8v6M445 338.8v6M464.5 338.8v6M484 338.8v6M503.5 337.8v8M523 338.8v6M542.5 338.8v6M562 338.8v6M581.5 338.8v6M601 337.8v8M620.5 338.8v6M640 338.8v6M659.5 338.8v6M679 338.8v6M698.5 337.8v8M718 338.8v6M737.5 338.8v6M757 338.8v6M776.5 338.8v6M796 337.8v8M815.5 338.8v6M835 338.8v6M854.5 338.8v6M874 338.8v6M893.5 337.8v8M913 338.8v6M932.5 338.8v6M952 338.8v6M971.5 338.8v6M500.5 47.56h6M500.5 59.82h6M500.5 72.08h6M500.5 84.34h6M499.5 96.6h8M500.5 108.86h6M500.5 121.12h6M500.5 133.38h6M500.5 145.64h6M499.5 157.9h8M500.5 170.16h6M500.5 182.42h6M500.5 194.68h6M500.5 206.94h6M499.5 219.2h8M500.5 231.46h6M500.5 243.72h6M500.5 255.98h6M500.5 268.24h6M499.5 280.5h8M500.5 292.76h6M500.5 305.02h6M500.5 317.28h6M500.5 329.54h6M499.5 341.8h8M500.5 354.06h6M500.5 366.32h6M500.5 378.58h6M500.5 390.84h6M499.5 403.1h8M500.5 415.36h6M500.5 427.62h6M500.5 439.88h6M500.5 452.14h6M499.5 464.4h8M500.5 476.66h6M500.5 488.92h6M500.5 501.18h6M500.5 513.44h6M499.5 525.7h8M500.5 537.96h6M500.5 550.22h6M500.5 562.48h6M500.5 574.74h6M499.5 587h8M500.5 599.26h6M500.5 611.52h6M500.5 623.78h6M500.5 636.04h6" stroke="#8a816c" stroke-width="1.45" fill="none"/><rect x="21.2" y="657.7" width="272.6" height="22.7" rx="6" ry="6" fill="none" stroke="#a6a6a6" stroke-width="1.6"/><rect x="299.2" y="657.8" width="262.9" height="89.4" rx="6" ry="6" fill="none" stroke="#a6a6a6" stroke-width="1.6"/><rect x="577.2" y="657.8" width="180" height="35.1" rx="6" ry="6" fill="none" stroke="#a6a6a6" stroke-width="1.6"/><rect x="762.7" y="657.8" width="224.1" height="89.4" rx="6" ry="6" fill="none" stroke="#a6a6a6" stroke-width="1.6"/><path d="M16 219.2H991" stroke="#168cd8" stroke-width="1.3" stroke-dasharray="3.2 1.68" fill="none"/><path d="M16 445.1H991" stroke="#168cd8" stroke-width="1.3" fill="none"/><path d="M352.5 35.3V648.3" stroke="#168cd8" stroke-width="1.3" fill="none"/><path d="M597.7 35.3V648.3" stroke="#168cd8" stroke-width="1.3" stroke-dasharray="3.8 1.08" fill="none"/><polyline points="16,359.55 16.98,359.66 17.95,362.53 18.93,355.91 19.9,346.33 20.88,346.78 21.86,347.49 22.83,347.1 23.81,340.45 24.78,342.85 25.76,342.51 26.74,335.16 27.71,333.32 28.69,332.67 29.66,329.94 30.64,327.09 31.62,325.2 32.59,326.1 33.57,320.65 34.54,315.61 35.52,317.25 36.5,315.44 37.47,316.26 38.45,311.49 39.42,309.02 40.4,309.52 41.38,308.1 42.35,306.89 43.33,302.89 44.3,303.22 45.28,302.75 46.26,294.11 47.23,296.47 48.21,294.07 49.18,295.71 50.16,287.6 51.14,286.64 52.11,291.76 53.09,288.43 54.06,286.53 55.04,285.03 56.02,284.63 56.99,282.29 57.97,279.83 58.94,276.6 59.92,276 60.89,273.73 61.87,273.36 62.85,271.66 63.82,270.09 64.8,267.33 65.77,268.92 66.75,266.32 67.73,264.93 68.7,259.34 69.68,262.98 70.65,259.34 71.63,257.83 72.61,261.42 73.58,257.85 74.56,253.29 75.53,253.8 76.51,250.56 77.49,257.18 78.46,252.64 79.44,246.93 80.41,250.22 81.39,243.56 82.37,242.87 83.34,242.17 84.32,241.73 85.29,239.24 86.27,239.68 87.25,242.09 88.22,233.59 89.2,234.71 90.17,235.77 91.15,231.61 92.13,236.36 93.1,230.13 94.08,227.5 95.05,230.3 96.03,222.63 97.01,228.23 97.98,228.9 98.96,223.07 99.93,219.86 100.91,219.44 101.89,219.34 102.86,216.9 103.84,216.22 104.81,213.94 105.79,218.68 106.77,216.54 107.74,215.74 108.72,220.31 109.69,220.18 110.67,220.22 111.65,225.41 112.62,227.99 113.6,231.28 114.57,234.05 115.55,243.99 116.53,243.55 117.5,244.96 118.48,245.46 119.45,251.42 120.43,254.12 121.41,257.46 122.38,264.57 123.36,262.35 124.33,263.76 125.31,270.24 126.29,277.43 127.26,277.45 128.24,275.77 129.21,284.48 130.19,287.78 131.17,291.52 132.14,292.15 133.12,301.21 134.09,301.92 135.07,302.23 136.05,302.02 137.02,302.73 138,308.79 138.97,315.28 139.95,321.26 140.92,318.44 141.9,320.46 142.88,320.7 143.85,326.21 144.83,328.45 145.8,330.61 146.78,336.1 147.76,334.74 148.73,336.07 149.71,335.47 150.68,340.66 151.66,341.35 152.64,344.07 153.61,345.38 154.59,344.45 155.56,348.57 156.54,347.6 157.52,348.9 158.49,351.96 159.47,353.72 160.44,353.89 161.42,361.9 162.4,357.8 163.37,361.48 164.35,363.31 165.32,365.31 166.3,362.9 167.28,364.49 168.25,367.24 169.23,367.13 170.2,367.31 171.18,374.33 172.16,371.05 173.13,376.34 174.11,375.13 175.08,375.66 176.06,377.26 177.04,379.73 178.01,376.97 178.99,381.71 179.96,385.58 180.94,389 181.92,388.05 182.89,391.07 183.87,392.29 184.84,392.35 185.82,395.24 186.8,397.68 187.77,397.79 188.75,402.44 189.72,404.93 190.7,409.33 191.68,406.64 192.65,404.4 193.63,409.02 194.6,407.67 195.58,413.9 196.56,413.16 197.53,418.96 198.51,414.8 199.48,412.46 200.46,417.35 201.44,419.51 202.41,417.99 203.39,418.12 204.36,422.75 205.34,419.94 206.32,420.8 207.29,424.33 208.27,425.05 209.24,425.67 210.22,425.95 211.2,428.62 212.17,426.1 213.15,425.32 214.12,433.49 215.1,429.63 216.08,430.45 217.05,432.12 218.03,434.76 219,437.48 219.98,435.76 220.95,437.41 221.93,441.54 222.91,439 223.88,440.25 224.86,439.77 225.83,442.54 226.81,440.57 227.79,443.31 228.76,450.26 229.74,443.99 230.71,445.6 231.69,446.64 232.67,447.36 233.64,445.78 234.62,441.55 235.59,433.97 236.57,430.59 237.55,424.66 238.52,423.32 239.5,417.28 240.47,418.43 241.45,414.75 242.43,414.95 243.4,410.75 244.38,406.27 245.35,402.09 246.33,401.56 247.31,401.52 248.28,395.27 249.26,392.19 250.23,392.23 251.21,386.34 252.19,382.14 253.16,382.03 254.14,376.32 255.11,373.54 256.09,369 257.07,365.19 258.04,362.22 259.02,362.64 259.99,360.84 260.97,362.07 261.95,358.87 262.92,352.12 263.9,356.35 264.87,350.02 265.85,347.15 266.83,355.26 267.8,343.96 268.78,343.55 269.75,341.92 270.73,342.96 271.71,336.34 272.68,332.93 273.66,336.5 274.63,334.68 275.61,331.7 276.59,325.05 277.56,325.76 278.54,324.03 279.51,321.87 280.49,319.42 281.47,318.52 282.44,312.86 283.42,312.67 284.39,313.69 285.37,315.38 286.35,309.62 287.32,305.96 288.3,304.54 289.27,301.06 290.25,301.72 291.23,295.79 292.2,297.83 293.18,297.15 294.15,292.73 295.13,294.38 296.11,290 297.08,286.84 298.06,288.49 299.03,282.82 300.01,283.37 300.98,286.41 301.96,285.29 302.94,280.41 303.91,272.83 304.89,276.26 305.86,274.38 306.84,273.49 307.82,273.34 308.79,271.09 309.77,271.92 310.74,273.44 311.72,268.46 312.7,269.14 313.67,262.46 314.65,261.72 315.62,257.63 316.6,259.55 317.58,258.85 318.55,259.63 319.53,252.61 320.5,253.1 321.48,249.53 322.46,248.58 323.43,246.77 324.41,245.33 325.38,245 326.36,243.7 327.34,242.25 328.31,244.98 329.29,240.74 330.26,238.6 331.24,236.96 332.22,237.63 333.19,232.47 334.17,237.04 335.14,235.86 336.12,237.8 337.1,232.49 338.07,231.86 339.05,224.56 340.02,226.56 341,226.59 341.98,225.09 342.95,226.62 343.93,221.09 344.9,219.41 345.88,221 346.86,222.52 347.83,222.8 348.81,220.81 349.78,221.36 350.76,219.93 351.74,219.59 352.71,219.76 353.69,221.03 354.66,217.01 355.64,221.22 356.62,219.69 357.59,228.87 358.57,231.26 359.54,237 360.52,241.42 361.5,241.62 362.47,245.91 363.45,250.01 364.42,252.37 365.4,253.42 366.38,254.36 367.35,257.73 368.33,264.86 369.3,265.24 370.28,269.97 371.26,276.37 372.23,279.25 373.21,286.16 374.18,286.57 375.16,285.53 376.14,292.89 377.11,297.77 378.09,298.39 379.06,301.06 380.04,304.73 381.02,304.67 381.99,310.78 382.97,310.42 383.94,313.77 384.92,319.16 385.89,317.87 386.87,320.61 387.85,321.68 388.82,324.53 389.8,326.45 390.77,332.97 391.75,336.84 392.73,329.88 393.7,332.98 394.68,337.09 395.65,340 396.63,339.82 397.61,346.74 398.58,345.94 399.56,352.02 400.53,345.16 401.51,350.49 402.49,352.84 403.46,352.75 404.44,351.06 405.41,356.57 406.39,358.73 407.37,358.82 408.34,359.34 409.32,364.65 410.29,368.92 411.27,367.75 412.25,366.51 413.22,368.31 414.2,375.45 415.17,372 416.15,374.11 417.13,373.94 418.1,371.32 419.08,373.91 420.05,381.28 421.03,382.16 422.01,384.38 422.98,385.65 423.96,383.11 424.93,389.32 425.91,385.81 426.89,388.15 427.86,396.12 428.84,398.57 429.81,396.93 430.79,400.19 431.77,400.54 432.74,403.03 433.72,405.43 434.69,409.23 435.67,407.01 436.65,408.21 437.62,405.82 438.6,408.54 439.57,411.02 440.55,413.26 441.53,412.32 442.5,414.05 443.48,414.57 444.45,416.18 445.43,414.64 446.41,423.62 447.38,421.2 448.36,416.81 449.33,421.56 450.31,428.26 451.29,421.67 452.26,421.17 453.24,430.93 454.21,429.27 455.19,430.38 456.17,427.94 457.14,432.32 458.12,429.28 459.09,430.54 460.07,429.71 461.05,431.21 462.02,434.31 463,434.13 463.97,437.37 464.95,436.31 465.92,438.92 466.9,441.87 467.88,436.92 468.85,438.49 469.83,442.04 470.8,444.4 471.78,444.44 472.76,440.89 473.73,444.88 474.71,440.31 475.68,441.6 476.66,443.09 477.64,439.34 478.61,441.48 479.59,438.04 480.56,434.66 481.54,426.72 482.52,420.29 483.49,415.09 484.47,415.25 485.44,412.05 486.42,408.82 487.4,407.19 488.37,404.7 489.35,409.04 490.32,404.08 491.3,401.02 492.28,397.64 493.25,394.1 494.23,390.6 495.2,388.24 496.18,384.52 497.16,383.97 498.13,381.38 499.11,378.63 500.08,373.12 501.06,368.53 502.04,363.09 503.01,366.57 503.99,362.03 504.96,357.9 505.94,353.87 506.92,355.24 507.89,351.79 508.87,350.99 509.84,349.58 510.82,349.06 511.8,341.14 512.77,338.36 513.75,339.39 514.72,337.49 515.7,336.76 516.68,329.69 517.65,329.98 518.63,328.18 519.6,328.29 520.58,332.3 521.56,321.85 522.53,320.47 523.51,319.07 524.48,318.02 525.46,314.56 526.44,311.29 527.41,309.24 528.39,311.7 529.36,309.08 530.34,307.99 531.32,304.59 532.29,303.92 533.27,301.06 534.24,301.98 535.22,300.16 536.2,294.22 537.17,289.3 538.15,290.33 539.12,291.48 540.1,286.03 541.08,287.93 542.05,285.81 543.03,284.99 544,282.81 544.98,285.22 545.95,276.84 546.93,281.65 547.91,281.46 548.88,278.98 549.86,274.17 550.83,270.51 551.81,275.41 552.79,273.13 553.76,269.63 554.74,266.64 555.71,268.73 556.69,262.61 557.67,263.02 558.64,261.22 559.62,259.16 560.59,255.06 561.57,256.81 562.55,259.87 563.52,257.13 564.5,252.6 565.47,252.45 566.45,249.65 567.43,246.65 568.4,248.35 569.38,248.63 570.35,246.7 571.33,245.02 572.31,243.12 573.28,240.76 574.26,240.33 575.23,243.12 576.21,236.14 577.19,235.26 578.16,236.06 579.14,232.26 580.11,231.4 581.09,231.15 582.07,228.92 583.04,227.27 584.02,231.61 584.99,226.11 585.97,223.99 586.95,226.01 587.92,226.22 588.9,226.68 589.87,222.86 590.85,222.85 591.83,225.22 592.8,222.37 593.78,219.88 594.75,223.09 595.73,220.82 596.71,218.03 597.68,223.04 598.66,223 599.63,225.17 600.61,225.55 601.59,231.93 602.56,229.15 603.54,232.64 604.51,236.32 605.49,242.98 606.47,243.86 607.44,243.88 608.42,248.05 609.39,250.88 610.37,259.34 611.35,259.32 612.32,266.89 613.3,267.42 614.27,269.7 615.25,278.86 616.23,277.67 617.2,279.22 618.18,284.24 619.15,287.99 620.13,289.96 621.11,294.81 622.08,295.56 623.06,290.77 624.03,301.08 625.01,306.99 625.98,309.34 626.96,308.96 627.94,313.21 628.91,313.82 629.89,314.99 630.86,319.81 631.84,319.97 632.82,329.75 633.79,328.38 634.77,325.75 635.74,331.92 636.72,331.35 637.7,332.46 638.67,335.85 639.65,339.98 640.62,339.17 641.6,340.25 642.58,347.69 643.55,350.68 644.53,350.21 645.5,350.34 646.48,351.71 647.46,353.67 648.43,355.2 649.41,357.84 650.38,353.77 651.36,354.53 652.34,357.26 653.31,359.98 654.29,362.19 655.26,363.36 656.24,367.36 657.22,370.15 658.19,365.69 659.17,371.19 660.14,373.95 661.12,375.23 662.1,379.54 663.07,379.68 664.05,379.66 665.02,376.37 666,382.43 666.98,386.2 667.95,388.78 668.93,388.04 669.9,392.33 670.88,389.87 671.86,392.09 672.83,392.24 673.81,394.28 674.78,401.77 675.76,401.3 676.74,398.58 677.71,404.36 678.69,404.14 679.66,404.08 680.64,409.32 681.62,409.76 682.59,411.07 683.57,410.13 684.54,412.02 685.52,414.21 686.5,413.4 687.47,415.63 688.45,416.51 689.42,419.22 690.4,413.97 691.38,420.83 692.35,418.2 693.33,418.81 694.3,422.37 695.28,423.64 696.26,425.21 697.23,420.8 698.21,421.46 699.18,426.38 700.16,427.6 701.14,425.92 702.11,429.89 703.09,426.67 704.06,426.78 705.04,431.21 706.02,426.93 706.99,432.21 707.97,434.13 708.94,438.87 709.92,434.1 710.89,440.88 711.87,438.69 712.85,440.96 713.82,439.08 714.8,441.15 715.77,436.76 716.75,435.98 717.73,443.84 718.7,439.55 719.68,444.84 720.65,444.57 721.63,444.09 722.61,441.37 723.58,439.11 724.56,427.4 725.53,421.07 726.51,422.48 727.49,418.36 728.46,415.23 729.44,412.59 730.41,411.67 731.39,410.63 732.37,405.96 733.34,402.17 734.32,404.84 735.29,399.84 736.27,393.72 737.25,389.86 738.22,387.04 739.2,388.03 740.17,385.18 741.15,377.09 742.13,375.96 743.1,373.02 744.08,373.35 745.05,366.56 746.03,364.91 747.01,361.01 747.98,361.57 748.96,359.44 749.93,359.93 750.91,355.68 751.89,350.99 752.86,350.17 753.84,352.29 754.81,342.15 755.79,343.54 756.77,339.16 757.74,337.55 758.72,332.9 759.69,329.11 760.67,330.07 761.65,331.55 762.62,336.18 763.6,330.46 764.57,325.64 765.55,324.11 766.53,323.72 767.5,317.89 768.48,315.72 769.45,313.69 770.43,314.37 771.41,315.81 772.38,313.4 773.36,306.71 774.33,308.79 775.31,307.45 776.29,301.43 777.26,303.52 778.24,301.1 779.21,299.17 780.19,297.7 781.17,293.66 782.14,290.56 783.12,290.69 784.09,289.82 785.07,288.7 786.05,286.01 787.02,283.49 788,283.17 788.97,281.28 789.95,282.36 790.92,278.04 791.9,276.69 792.88,272.56 793.85,271.92 794.83,272.54 795.8,270.71 796.78,265.72 797.76,270.9 798.73,265.69 799.71,264.93 800.68,262.12 801.66,262.24 802.64,256.7 803.61,260.03 804.59,257.94 805.56,255.62 806.54,257.05 807.52,254.68 808.49,259.17 809.47,252.37 810.44,244.69 811.42,250.56 812.4,245.69 813.37,247.37 814.35,248.04 815.32,248.58 816.3,244.06 817.28,239.81 818.25,240.67 819.23,239.62 820.2,238.47 821.18,236.07 822.16,234.68 823.13,230.86 824.11,233.19 825.08,230.78 826.06,231.07 827.04,231.2 828.01,230.76 828.99,225.41 829.96,225.53 830.94,225.2 831.92,224.4 832.89,223.13 833.87,222.5 834.84,217.9 835.82,219.3 836.8,219.44 837.77,220.14 838.75,216.12 839.72,216.06 840.7,216.32 841.68,218.18 842.65,218.46 843.63,217.25 844.6,227.25 845.58,225.64 846.56,232.77 847.53,238.63 848.51,236.03 849.48,243.49 850.46,245.86 851.44,247.34 852.41,249.88 853.39,259.79 854.36,258.2 855.34,262.8 856.32,259.22 857.29,263.17 858.27,270.39 859.24,271.81 860.22,274.57 861.2,278.04 862.17,284.1 863.15,286.21 864.12,290.22 865.1,293.1 866.08,303.33 867.05,299.18 868.03,299.16 869,306.58 869.98,307.24 870.95,309.6 871.93,313.71 872.91,315.63 873.88,320.22 874.86,320.47 875.83,322.54 876.81,326.38 877.79,329.38 878.76,327.39 879.74,328.03 880.71,336.09 881.69,332.08 882.67,337.15 883.64,336.61 884.62,336.08 885.59,336.45 886.57,343 887.55,341.4 888.52,349.61 889.5,343.85 890.47,352.06 891.45,350.99 892.43,353.63 893.4,358.02 894.38,352.64 895.35,358.51 896.33,358.45 897.31,368.2 898.28,365.36 899.26,366.02 900.23,365.46 901.21,365.04 902.19,371.02 903.16,371.85 904.14,374.04 905.11,380.36 906.09,379.54 907.07,378.13 908.04,376.98 909.02,378.7 909.99,382.75 910.97,387.84 911.95,389.67 912.92,391.96 913.9,393.78 914.87,391.34 915.85,389.84 916.83,394.12 917.8,396.55 918.78,396.97 919.75,399.64 920.73,400.73 921.71,405.22 922.68,402.45 923.66,403.95 924.63,396.75 925.61,405.04 926.59,405.53 927.56,410.39 928.54,415.33 929.51,415 930.49,414.6 931.47,415.05 932.44,414.02 933.42,416.86 934.39,418.18 935.37,422.28 936.35,420.58 937.32,421.4 938.3,425.86 939.27,427.7 940.25,426.91 941.23,424.09 942.2,429.65 943.18,427.84 944.15,430.65 945.13,433.92 946.11,431.49 947.08,440.39 948.06,440.56 949.03,440.5 950.01,443.9 950.98,443.81 951.96,443.89 952.94,443.19 953.91,446.81 954.89,443.11 955.86,447.56 956.84,445.71 957.82,446.56 958.79,445.5 959.77,447.67 960.74,448.14 961.72,446.84 962.7,445.48 963.67,449.6 964.65,444.49 965.62,446.02 966.6,443.57 967.58,441.22 968.55,432.63 969.53,426.78 970.5,418.7 971.48,416.86 972.46,418.49 973.43,411.95 974.41,412.72 975.38,407.52 976.36,406.43 977.34,404.82 978.31,402.49 979.29,402.94 980.26,398.03 981.24,395.63 982.22,390.97 983.19,391.29 984.17,384.37 985.14,381.24 986.12,377.88 987.1,377.53 988.07,373.04 989.05,369.14 990.02,365.24 991,366.98" fill="none" stroke="#10a0fa" stroke-width="1.35" stroke-linejoin="round"/><path d="M267 35.3h10.4l-5.2 9.6z" fill="#f08000"/><circle cx="343.2" cy="96.5" r="5.9" fill="#f0a000"/><text x="343.2" y="99.9" font-family="Liberation Sans, sans-serif" font-weight="bold" font-size="10.5" text-anchor="middle" fill="#000">a</text><circle cx="113.5" cy="436.2" r="5.9" fill="#f0a000"/><text x="113.5" y="439.6" font-family="Liberation Sans, sans-serif" font-weight="bold" font-size="10.5" text-anchor="middle" fill="#000">b</text><path d="M971.8 338.4l8.4-4.8v3.9h13.6v1.8h-13.6v3.9z" fill="#1c9cf0"/><path d="M5.8 641.6h9.4l-4.7 7.8z" fill="#00a2ff"/><path d="M10.5 636v7" stroke="#00a2ff" stroke-width="1.6"/><circle cx="10.4" cy="629.7" r="8.9" fill="#00a4ff" stroke="#f0a000" stroke-width="1.4"/><text transform="translate(5.9 629.8) rotate(90)" font-family="Liberation Sans, sans-serif" font-size="12.5" text-anchor="middle" fill="#020c24">2</text></svg>
</body>
</html>
